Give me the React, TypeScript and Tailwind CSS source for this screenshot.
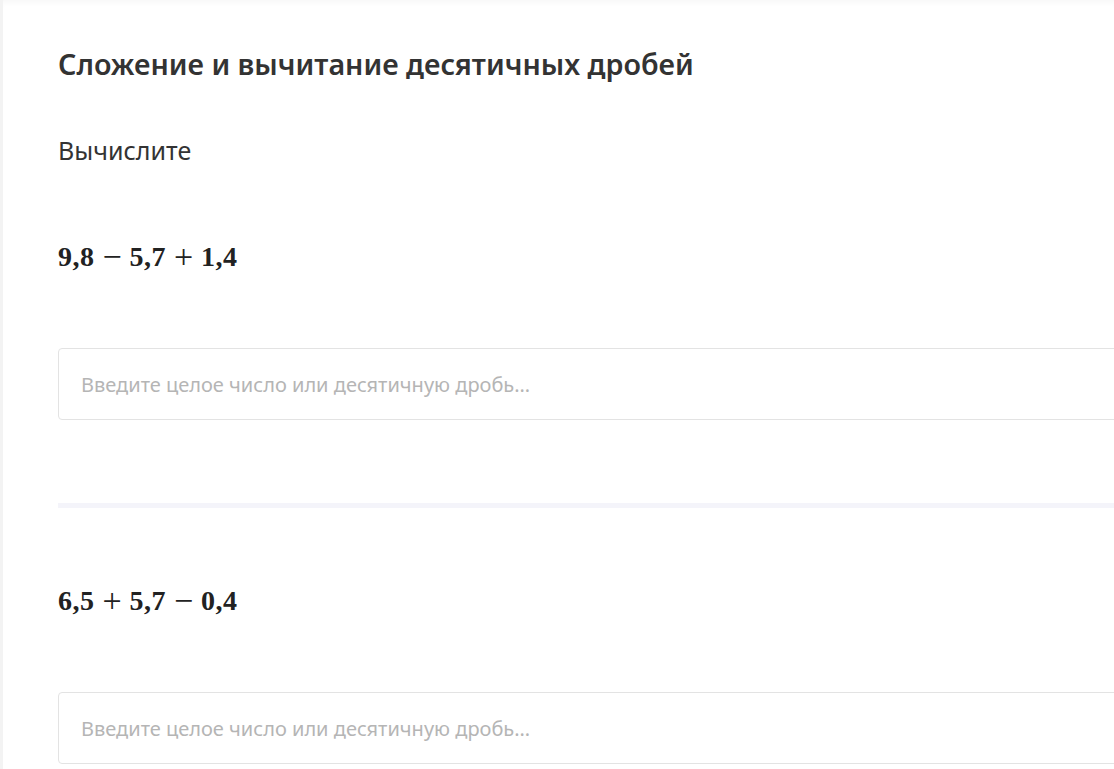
import { useState } from 'react';

interface Task {
  id: number;
  parts: string[];
}

const tasks: Task[] = [
  { id: 1, parts: ['9,8', '−', '5,7', '+', '1,4'] },
  { id: 2, parts: ['6,5', '+', '5,7', '−', '0,4'] },
];

function TaskBlock({ task }: { task: Task }) {
  const [value, setValue] = useState('');

  return (
    <div>
      <p className="flex items-center font-['Liberation_Serif',serif] text-[28px] leading-8 font-bold text-[#222]">
        {task.parts.map((p, i) =>
          i % 2 === 1 ? (
            <span key={i} className="w-[35px] text-center text-[34px] leading-8 font-normal">{p}</span>
          ) : (
            <span key={i} className="tracking-[0.5px]">{p}</span>
          )
        )}
      </p>
      <input
        type="text"
        value={value}
        onChange={e => setValue(e.target.value)}
        placeholder="Введите целое число или десятичную дробь…"
        className="mt-[75px] block h-[72px] w-full rounded-[4px] border border-[#e3e3e3] bg-white px-[22px] text-[20px] text-[#333] placeholder:text-[#b5b5b5] outline-none"
      />
    </div>
  );
}

export default function App() {
  return (
    <div className="min-h-[769px] overflow-hidden bg-[#f3f3f3] pl-[3px] font-['Noto_Sans',sans-serif]">
      <div className="min-h-[769px] bg-white pl-[55px] pt-[46px] shadow-[inset_0_6px_6px_-4px_rgba(0,0,0,0.04)]">
        <div className="-mr-[40px]">
          <h1 className="text-[28.7px] leading-9 font-semibold text-[#333]">Сложение и вычитание десятичных дробей</h1>
          <p className="mt-[52px] text-[25px] leading-8 text-[#333]">Вычислите</p>

          <div className="mt-[75px]">
            <TaskBlock task={tasks[0]} />
          </div>

          <div className="mt-[83px] h-[5px] bg-[#f4f4fa]" />

          <div className="mt-[77px]">
            <TaskBlock task={tasks[1]} />
          </div>
        </div>
      </div>
    </div>
  );
}
